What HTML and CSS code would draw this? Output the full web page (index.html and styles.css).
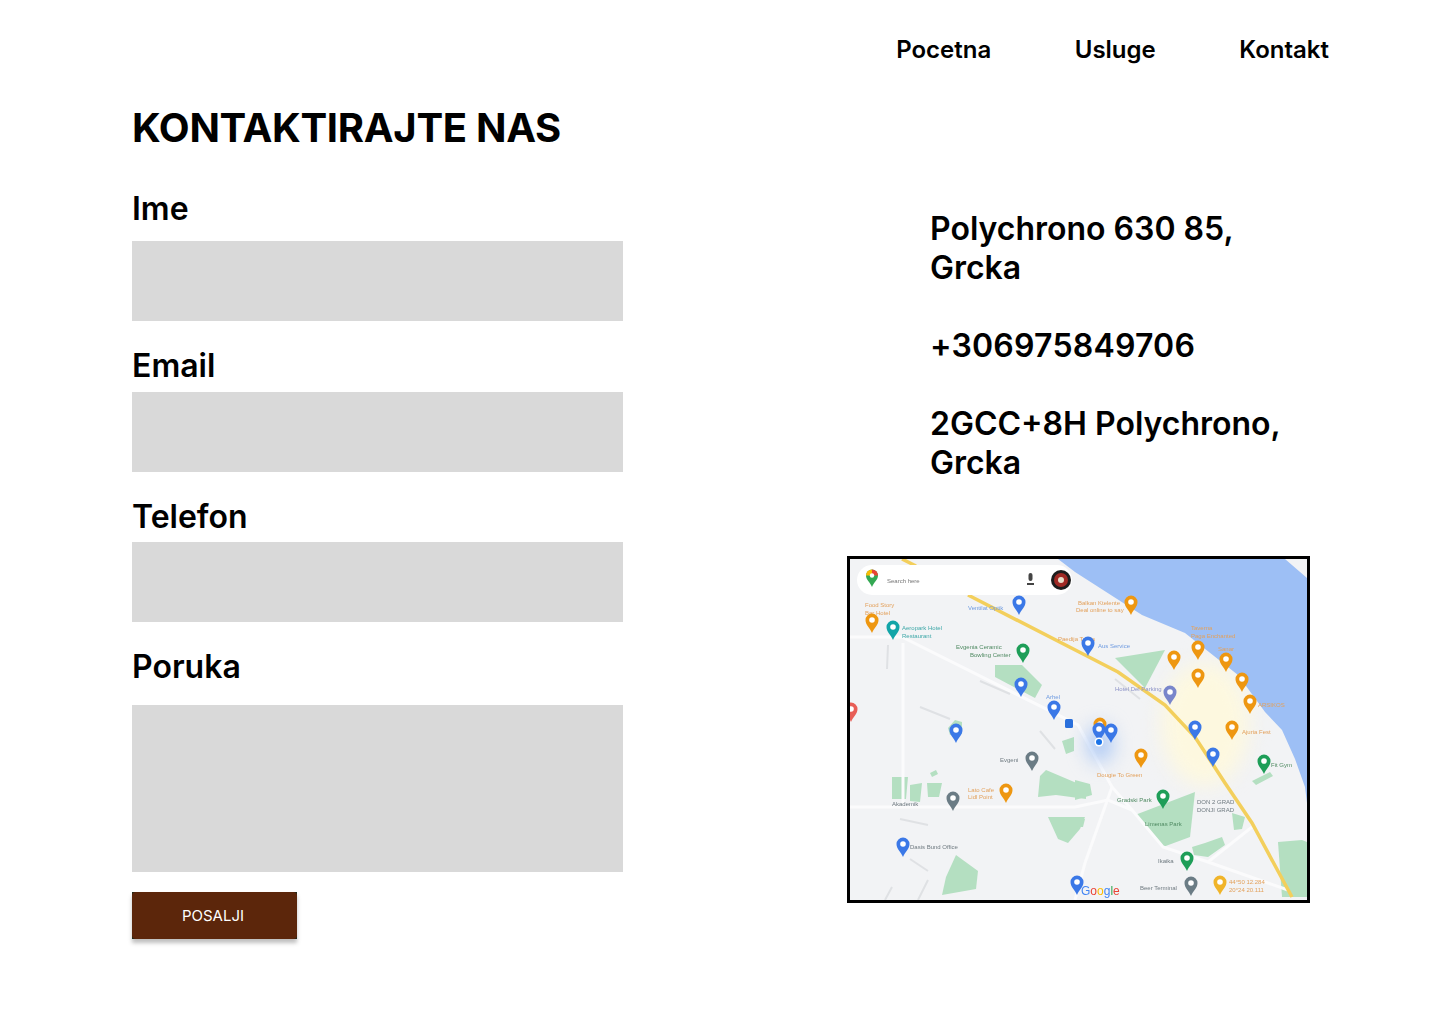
FILE: index.html
```html
<!DOCTYPE html>
<html lang="sr">
<head>
<meta charset="utf-8">
<title>Kontakt</title>
<link rel="stylesheet" href="styles.css">
</head>
<body>
<nav class="nav">
  <a class="nav-link" href="#">Pocetna</a>
  <a class="nav-link" href="#">Usluge</a>
  <a class="nav-link" href="#">Kontakt</a>
</nav>
<main class="content">
  <section class="form-col">
    <h1 class="title">KONTAKTIRAJTE NAS</h1>
    <form class="form">
      <label class="label label-first">Ime</label>
      <div class="input"></div>
      <label class="label label-email">Email</label>
      <div class="input"></div>
      <label class="label label-phone">Telefon</label>
      <div class="input"></div>
      <label class="label label-msg">Poruka</label>
      <div class="input textarea"></div>
      <button class="submit" type="button"><span class="submit-face">POSALJI</span></button>
    </form>
  </section>
  <section class="info-col">
    <div class="info">
      <p class="info-p">Polychrono 630 85,<br>Grcka</p>
      <p class="info-p info-phone">+306975849706</p>
      <p class="info-p">2GCC+8H Polychrono,<br>Grcka</p>
    </div>
    <div class="map">
      <svg class="map-svg" viewBox="0 0 457 341" width="457" height="341" xmlns="http://www.w3.org/2000/svg">
        <defs>
          <g id="pin"><path d="M0 10C-2 5-6.500 2-6.500-3A6.500 6.500 0 0 1 6.500-3C6.500 2 2 5 0 10Z"/><circle cy="-3" r="2.800" fill="#fff"/></g>
        </defs>
        <rect width="457" height="341" fill="#f2f3f5"/>
        <ellipse class="blur-big" cx="355" cy="165" rx="44" ry="62" fill="#fdf8df"/>
        <g fill="#b4dfc1">
          <path d="M145 106L172 106L192 126L185 139L145 118Z"/>
          <path d="M98 169L105 161L112 163L112 175L100 176Z"/>
          <path d="M42 218L58 218L56 240L42 240Z M60 226L72 224L70 243L60 242Z M77 224L92 224L89 238L78 238Z M80 214L86 211L88 215L82 218Z"/>
          <path d="M190 217L196 211L236 228L236 240L206 236L188 238Z"/>
          <path d="M198 258L235 258L230 270L218 284L208 280Z"/>
          <path d="M212 182L224 178L224 192L216 195Z"/>
          <path d="M106 296L128 312L126 330L92 336L96 318Z"/>
          <path d="M265 99L315 91L295 129Z"/>
          <path d="M285 256L345 233L340 278L313 288Z"/>
          <path d="M342 288L355 284L372 278L375 286L358 298L344 296Z"/>
          <path d="M225 221L240 225L242 236L225 241Z M225 258L235 260L233 268L225 268Z"/>
          <path d="M382 254L395 258L392 270L384 271Z M402 222L420 213L423 217L406 226Z"/>
          <path d="M428 283L452 281L457 283L457 338L432 338Z"/>
        </g>
        <g fill="none" stroke="#fbfbfc" stroke-width="3">
          <path d="M0 78L52 78L228 166L262 228L282 251L313 288L358 303L438 331"/>
          <path d="M0 248L225 248L258 241L282 251"/>
          <path d="M262 228L235 304L225 341"/>
          <path d="M358 303L402 268"/>
          <path d="M53 84L53 248"/>
        </g>
        <g fill="none" stroke="#dfe1e4" stroke-width="2">
          <path d="M38 86L37 110M130 122L160 135M70 148L100 160M50 260L78 266M60 300L78 312M78 321L68 341M35 341L42 328M290 140L265 120M190 172L205 190"/>
        </g>
        <path d="M208 0L225 13L292 56L335 74L388 116L415 153L432 171L445 200L455 228L457 244L457 19L435 0Z" fill="#9dbff5"/>
        <g fill="none" stroke="#f3cf5c" stroke-width="3.500">
          <path d="M52 0L66 7"/>
          <path d="M118 36L235 96L268 113L315 146L345 178L375 224L402 264L442 338"/>
        </g>
        <ellipse class="blur-big" cx="250" cy="185" rx="12" ry="18" fill="#a5c4f5"/>
        <g class="labels">
          <text x="15" y="48" class="lbl lbl-o">Food Story</text>
          <text x="15" y="56" class="lbl lbl-o">Bar Hotel</text>
          <text x="52" y="71" class="lbl lbl-t">Aeropark Hotel</text>
          <text x="52" y="79" class="lbl lbl-t">Restaurant</text>
          <text x="118" y="51" class="lbl lbl-b">Ventilat Optik</text>
          <text x="106" y="90" class="lbl lbl-g">Evgenia Ceramic</text>
          <text x="120" y="98" class="lbl lbl-g">Bowling Center</text>
          <text x="196" y="140" class="lbl lbl-b">Arhel</text>
          <text x="228" y="46" class="lbl lbl-o">Balkan Ktelente</text>
          <text x="226" y="53" class="lbl lbl-o">Deal online to say</text>
          <text x="341" y="71" class="lbl lbl-o">Taverna</text>
          <text x="341" y="79" class="lbl lbl-o">Paga Enchanted</text>
          <text x="368" y="92" class="lbl lbl-o">Sanar</text>
          <text x="408" y="148" class="lbl lbl-o">ARSIKOS</text>
          <text x="392" y="175" class="lbl lbl-o">Ajuria Fest</text>
          <text x="208" y="82" class="lbl lbl-o">Paedija Tarvis</text>
          <text x="248" y="89" class="lbl lbl-b">Aus Service</text>
          <text x="265" y="132" class="lbl lbl-p">Hotel Del Parking</text>
          <text x="118" y="233" class="lbl lbl-o">Lato Cafe</text>
          <text x="118" y="240" class="lbl lbl-o">Lidl Point</text>
          <text x="150" y="203" class="lbl lbl-g2">Evgeni</text>
          <text x="60" y="290" class="lbl lbl-g2">Dasis Bund Office</text>
          <text x="42" y="247" class="lbl lbl-g2">Akademik</text>
          <text x="247" y="218" class="lbl lbl-o">Dougie To Green</text>
          <text x="267" y="243" class="lbl lbl-g">Gradski Park</text>
          <text x="295" y="267" class="lbl lbl-g">Limenas Park</text>
          <text x="347" y="245" class="lbl lbl-g2">DON 2 GRAD</text>
          <text x="347" y="253" class="lbl lbl-g2">DONJI GRAD</text>
          <text x="308" y="304" class="lbl lbl-g2">Ikaika</text>
          <text x="290" y="331" class="lbl lbl-g2">Beer Terminal</text>
          <text x="379" y="325" class="lbl lbl-o">44°50 12.284</text>
          <text x="379" y="333" class="lbl lbl-o">20°24 20.111</text>
          <text x="421" y="208" class="lbl lbl-g">Fit Gym</text>
        </g>
        <g fill="#ee9711">
          <use href="#pin" x="22" y="64"/><use href="#pin" x="281" y="46"/><use href="#pin" x="348" y="91"/>
          <use href="#pin" x="324" y="101"/><use href="#pin" x="348" y="119"/><use href="#pin" x="376" y="103"/>
          <use href="#pin" x="392" y="123"/><use href="#pin" x="400" y="145"/><use href="#pin" x="382" y="171"/>
          <use href="#pin" x="156" y="234"/><use href="#pin" x="291" y="199"/><use href="#pin" x="250" y="168"/>
        </g>
        <use href="#pin" x="370" y="326" fill="#f0b429"/>
        <g fill="#3b78e7">
          <use href="#pin" x="169" y="46"/><use href="#pin" x="171" y="128"/><use href="#pin" x="204" y="151"/>
          <use href="#pin" x="106" y="174"/><use href="#pin" x="238" y="87"/><use href="#pin" x="345" y="171"/>
          <use href="#pin" x="53" y="288"/><use href="#pin" x="363" y="198"/><use href="#pin" x="227" y="326"/>
          <use href="#pin" x="249" y="173"/><use href="#pin" x="261" y="174"/>
        </g>
        <use href="#pin" x="320" y="136" fill="#7986cb"/>
        <g fill="#1e9e58">
          <use href="#pin" x="173" y="94"/><use href="#pin" x="414" y="205"/><use href="#pin" x="313" y="240"/><use href="#pin" x="337" y="302"/>
        </g>
        <use href="#pin" x="43" y="71" fill="#12a5a8"/>
        <g fill="#6b7c85">
          <use href="#pin" x="182" y="202"/><use href="#pin" x="103" y="242"/><use href="#pin" x="341" y="327"/>
        </g>
        <use href="#pin" x="1" y="153" fill="#e85e57"/>
        <circle cx="249" cy="183" r="4.500" fill="#fff"/><circle cx="249" cy="183" r="3" fill="#1a73e8"/>
        <rect x="215" y="160" width="8" height="9" rx="1.500" fill="#2a6fdb"/>
        <rect x="7" y="6" width="215" height="30" rx="15" fill="#fff"/>
        <path d="M22 28C20 23 16 21 16 16.500A6 6 0 0 1 28 16.500C28 21 24 23 22 28Z" fill="#34a853"/>
        <path d="M16 16.500A6 6 0 0 1 22 10.500L22 16.500Z" fill="#fbbc04"/>
        <path d="M22 10.500A6 6 0 0 1 28 16.500L22 16.500Z" fill="#ea4335"/>
        <circle cx="22" cy="16.500" r="2.200" fill="#fff"/>
        <text x="37" y="24" class="lbl lbl-s">Search here</text>
        <path d="M178.500 16a2 2 0 0 1 4 0v4a2 2 0 0 1-4 0ZM177 24h7v2h-7Z" fill="#444"/>
        <circle cx="211" cy="21" r="10" fill="#1d1d1d"/>
        <circle cx="211" cy="21" r="7" fill="#a02a25"/>
        <circle cx="211" cy="21" r="3" fill="#e8e0cc"/>
        <text x="231" y="336" class="google"><tspan fill="#4285f4">G</tspan><tspan fill="#ea4335">o</tspan><tspan fill="#fbbc04">o</tspan><tspan fill="#4285f4">g</tspan><tspan fill="#34a853">l</tspan><tspan fill="#ea4335">e</tspan></text>
      </svg>
    </div>
  </section>
</main>
</body>
</html>
```
FILE: styles.css
```css
* { box-sizing: border-box; }
html, body { margin: 0; padding: 0; }
body {
  width: 1440px;
  min-height: 1024px;
  background: #fff;
  color: #000;
  font-family: Inter, "Liberation Sans", sans-serif;
}
.nav {
  display: flex;
  justify-content: flex-end;
  gap: 83.5px;
  padding: 35px 111px 0 0;
  height: 104px;
}
.nav-link {
  color: #000;
  font-size: 24px;
  font-weight: 600;
  line-height: 29px;
  text-decoration: none;
}
.content {
  display: flex;
  padding-left: 132px;
}
.form-col { width: 491px; }
.title {
  margin: 0;
  font-size: 40px;
  font-weight: 700;
  letter-spacing: -0.3px;
  line-height: 48px;
}
.form { display: flex; flex-direction: column; align-items: flex-start; }
.label {
  font-size: 32px;
  font-weight: 600;
  line-height: 39px;
}
.label-first { margin: 37px 0 13px; }
.label-email { margin: 25px 0 7px; }
.label-phone { margin: 25px 0 6px; }
.label-msg { margin: 25px 0 19px; }
.input { width: 491px; height: 80px; background: #d9d9d9; }
.textarea { height: 167px; }
.submit {
  margin-top: 20px;
  padding: 0;
  width: 165px;
  height: 47px;
  border: 0;
  background: #20291a;
  box-shadow: 0 4px 4px rgba(0, 0, 0, 0.25);
  font-family: inherit;
}
.submit-face {
  display: flex;
  align-items: center;
  justify-content: center;
  height: 100%;
  padding-right: 3px;
  border-radius: 4px;
  background: #5c260b;
  color: #fff;
  font-size: 15px;
  font-weight: 400;
}
.info-col {
  margin-left: 224px;
  width: 463px;
}
.info {
  padding: 105px 0 0 83px;
  font-size: 32px;
  font-weight: 600;
  line-height: 39px;
}
.info-p { margin: 0 0 39px; }
.info-phone { letter-spacing: 0.2px; }
.map {
  margin-top: 74px;
  width: 463px;
  height: 347px;
  border: 3px solid #000;
}
.map-svg { display: block; filter: blur(0.6px); }
.blur-big { filter: blur(10px); }
.lbl { font-family: "Liberation Sans", sans-serif; font-size: 6px; }
.lbl-o { fill: #e3a15c; }
.lbl-t { fill: #3fa8a8; }
.lbl-b { fill: #6f9be0; }
.lbl-g { fill: #4f8a62; }
.lbl-p { fill: #8d93c7; }
.lbl-g2 { fill: #6f7a80; }
.lbl-s { fill: #777; }
.google { font-family: "Liberation Sans", sans-serif; font-size: 12px; }
```
